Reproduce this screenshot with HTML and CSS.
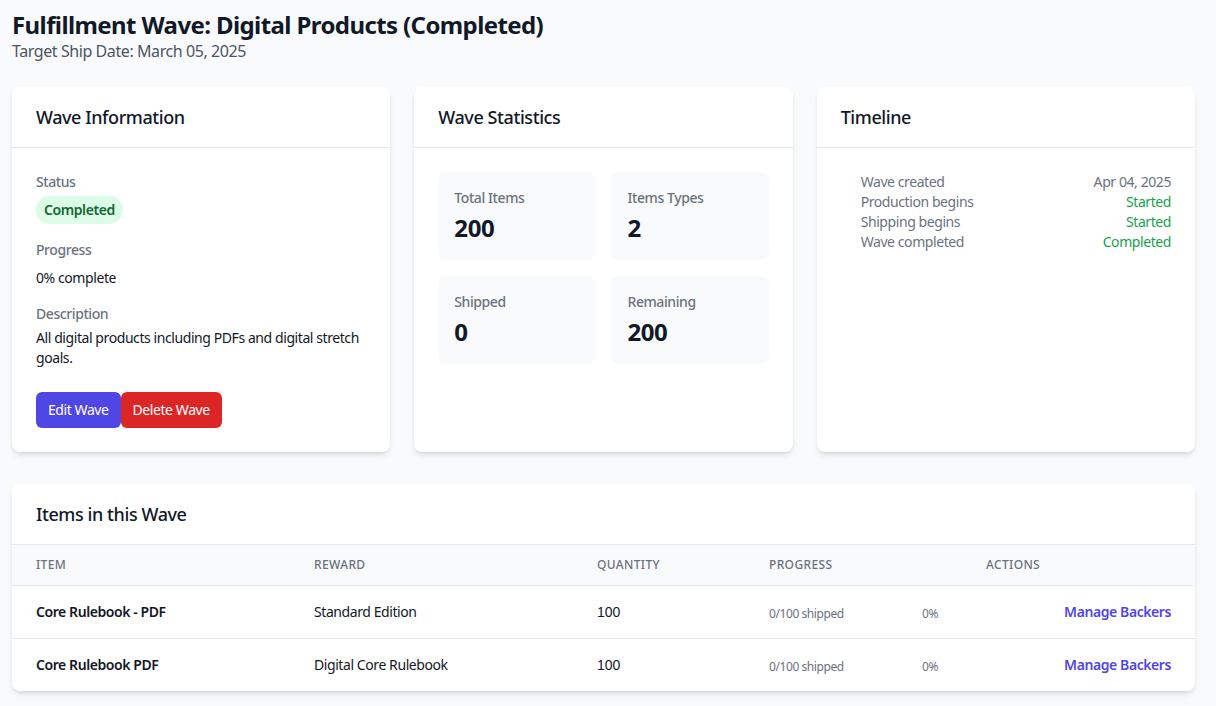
FILE: index.html
```html
<!DOCTYPE html>
<html lang="en">
<head>
<meta charset="utf-8">
<title>Fulfillment Wave</title>
<link rel="stylesheet" href="styles.css">
</head>
<body>
<div class="page">
  <header class="page-header">
    <h1 class="page-title">Fulfillment Wave: Digital Products (Completed)</h1>
    <p class="page-sub">Target Ship Date: March 05, 2025</p>
  </header>

  <div class="cards">
    <section class="card">
      <div class="card-head"><h2 class="card-title">Wave Information</h2></div>
      <div class="card-body">
        <div class="field">
          <div class="label">Status</div>
          <span class="badge">Completed</span>
        </div>
        <div class="field">
          <div class="label">Progress</div>
          <div class="value progress-val">0% complete</div>
        </div>
        <div class="field">
          <div class="label">Description</div>
          <div class="value desc">All digital products including PDFs and digital stretch goals.</div>
        </div>
        <div class="btns">
          <button class="btn btn-edit">Edit Wave</button>
          <button class="btn btn-delete">Delete Wave</button>
        </div>
      </div>
    </section>

    <section class="card">
      <div class="card-head"><h2 class="card-title">Wave Statistics</h2></div>
      <div class="card-body">
        <div class="stats">
          <div class="stat"><div class="stat-label">Total Items</div><div class="stat-val">200</div></div>
          <div class="stat"><div class="stat-label">Items Types</div><div class="stat-val">2</div></div>
          <div class="stat"><div class="stat-label">Shipped</div><div class="stat-val">0</div></div>
          <div class="stat"><div class="stat-label">Remaining</div><div class="stat-val">200</div></div>
        </div>
      </div>
    </section>

    <section class="card">
      <div class="card-head"><h2 class="card-title">Timeline</h2></div>
      <div class="card-body">
        <ul class="timeline">
          <li class="tl-row"><span>Wave created</span><span>Apr 04, 2025</span></li>
          <li class="tl-row"><span>Production begins</span><span class="green">Started</span></li>
          <li class="tl-row"><span>Shipping begins</span><span class="green">Started</span></li>
          <li class="tl-row"><span>Wave completed</span><span class="green">Completed</span></li>
        </ul>
      </div>
    </section>
  </div>

  <section class="card items-card">
    <div class="card-head"><h2 class="card-title">Items in this Wave</h2></div>
    <table class="items">
      <colgroup>
        <col class="c1"><col class="c2"><col class="c3"><col class="c4"><col class="c5">
      </colgroup>
      <thead>
        <tr><th>Item</th><th>Reward</th><th>Quantity</th><th>Progress</th><th>Actions</th></tr>
      </thead>
      <tbody>
        <tr>
          <td class="item-name">Core Rulebook - PDF</td>
          <td>Standard Edition</td>
          <td class="qty">100</td>
          <td><div class="prog"><span>0/100 shipped</span><span>0%</span></div></td>
          <td class="act"><a class="link" href="#">Manage Backers</a></td>
        </tr>
        <tr>
          <td class="item-name">Core Rulebook PDF</td>
          <td>Digital Core Rulebook</td>
          <td class="qty">100</td>
          <td><div class="prog"><span>0/100 shipped</span><span>0%</span></div></td>
          <td class="act"><a class="link" href="#">Manage Backers</a></td>
        </tr>
      </tbody>
    </table>
  </section>
</div>
</body>
</html>
```

FILE: styles.css
```css
* { box-sizing: border-box; }
html, body { margin: 0; padding: 0; }
body {
  background: #f9fafb;
  color: #111827;
  font-family: "Noto Sans", "Open Sans", sans-serif;
  font-size: 14px;
  line-height: 20px;
  letter-spacing: -0.03em;
}
.page { padding: 9px 21px 16px 12px; }
.page-header { margin-bottom: 25px; }
.page-title {
  margin: 0;
  font-size: 24px;
  line-height: 32px;
  font-weight: 700;
  letter-spacing: -0.025em;
  color: #111827;
}
.page-sub {
  margin: 0;
  font-size: 16px;
  line-height: 21px;
  color: #4b5563;
}
.cards {
  display: grid;
  grid-template-columns: repeat(3, 1fr);
  gap: 24px;
  margin-bottom: 32px;
}
.card {
  background: #fff;
  border-radius: 8px;
  box-shadow: 0 4px 6px -1px rgba(0,0,0,0.1), 0 2px 4px -2px rgba(0,0,0,0.1);
  overflow: hidden;
}
.card-head {
  padding: 16px 24px;
  border-bottom: 1px solid #e5e7eb;
}
.card-title {
  margin: 0;
  font-size: 18px;
  line-height: 28px;
  font-weight: 500;
  color: #111827;
}
.card-body { padding: 24px; }
.field { margin-bottom: 16px; }
.label {
  color: #6b7280;
  font-weight: 500;
  font-size: 14px;
  line-height: 20px;
}
.badge {
  display: inline-block;
  margin-top: 4px;
  padding: 4px 8px;
  border-radius: 9999px;
  background: #dcfce7;
  color: #166534;
  font-weight: 600;
  font-size: 14px;
  line-height: 20px;
}
.value { color: #111827; }
.progress-val { margin-top: 8px; }
.desc { margin-top: 4px; }
.btns { display: flex; margin-top: 24px; }
.btn {
  font-family: inherit;
  font-size: 14px;
  line-height: 20px;
  letter-spacing: -0.03em;
  padding: 8px 12px;
  border: 0;
  border-radius: 6px;
  color: #fff;
  cursor: pointer;
}
.btn-edit { background: #4f46e5; }
.btn-delete { background: #dc2626; }
.stats {
  display: grid;
  grid-template-columns: 1fr 1fr;
  gap: 16px;
}
.stat {
  background: #f9fafb;
  border-radius: 8px;
  padding: 16px;
}
.stat-label { color: #6b7280; font-weight: 500; }
.stat-val {
  margin-top: 4px;
  font-size: 24px;
  line-height: 32px;
  font-weight: 700;
  color: #111827;
}
.timeline {
  list-style: none;
  margin: 0;
  padding: 0 0 0 20px;
}
.tl-row {
  display: flex;
  justify-content: space-between;
  color: #6b7280;
}
.green { color: #16a34a; }
.items {
  width: 100%;
  border-collapse: collapse;
  table-layout: fixed;
}
.c1 { width: 278px; }
.c2 { width: 283px; }
.c3 { width: 172px; }
.c4 { width: 217px; }
.items th {
  background: #f9fafb;
  text-align: left;
  padding: 12px 24px;
  font-size: 12px;
  line-height: 16px;
  font-weight: 500;
  letter-spacing: 0.03em;
  text-transform: uppercase;
  color: #6b7280;
  border-bottom: 1px solid #e5e7eb;
}
.items td {
  padding: 16px 24px;
  font-size: 14px;
  line-height: 20px;
  color: #111827;
  vertical-align: top;
}
.items tbody tr + tr td { border-top: 1px solid #e5e7eb; }
.item-name { font-weight: 600; }
.qty { font-family: "Liberation Sans", Arial, sans-serif; letter-spacing: 0; }
.prog {
  display: flex;
  justify-content: space-between;
  margin-top: 4px;
  font-size: 12px;
  line-height: 16px;
  color: #6b7280;
}
.act { text-align: right; }
.link {
  color: #4f46e5;
  font-weight: 600;
  text-decoration: none;
}
```
